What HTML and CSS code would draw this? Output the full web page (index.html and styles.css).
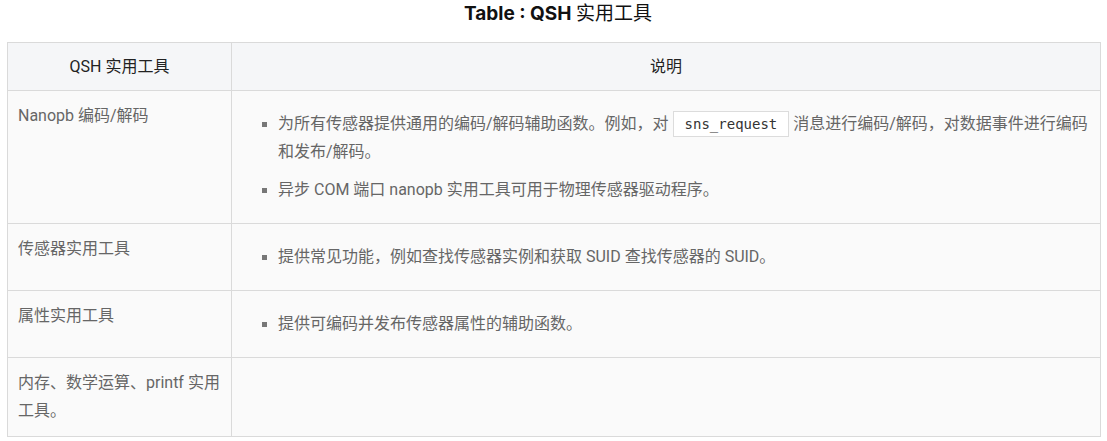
FILE: index.html
```html
<!DOCTYPE html>
<html lang="zh">
<head>
<meta charset="utf-8">
<link rel="stylesheet" href="styles.css">
</head>
<body>
<div class="wrap">
  <div class="caption">Table : QSH <span class="caption-cjk">实用工具</span></div>
  <table class="tbl">
    <colgroup><col class="c1"><col class="c2"></colgroup>
    <thead>
      <tr><th>QSH 实用工具</th><th>说明</th></tr>
    </thead>
    <tbody>
      <tr>
        <td>Nanopb 编码/解码</td>
        <td>
          <ul class="list">
            <li>为所有传感器提供通用的编码/解码辅助函数。例如，对 <code class="code">sns_request</code> 消息进行编码/解码，对数据事件进行编码和发布/解码。</li>
            <li>异步 COM 端口 nanopb 实用工具可用于物理传感器驱动程序。</li>
          </ul>
        </td>
      </tr>
      <tr>
        <td>传感器实用工具</td>
        <td>
          <ul class="list">
            <li>提供常见功能，例如查找传感器实例和获取 SUID 查找传感器的 SUID。</li>
          </ul>
        </td>
      </tr>
      <tr>
        <td>属性实用工具</td>
        <td>
          <ul class="list">
            <li>提供可编码并发布传感器属性的辅助函数。</li>
          </ul>
        </td>
      </tr>
      <tr>
        <td>内存、数学运算、printf 实用工具。</td>
        <td></td>
      </tr>
    </tbody>
  </table>
</div>
</body>
</html>
```

FILE: styles.css
```css
html, body {
  margin: 0;
  padding: 0;
  background: #ffffff;
}
.wrap {
  padding: 0 6px 0 7px;
}
.caption {
  font-family: "Inter", "Noto Sans CJK SC", sans-serif;
  font-weight: 700;
  font-size: 19px;
  color: #111;
  text-align: center;
  height: 42px;
  line-height: 28px;
  padding-left: 8px;
}
.caption-cjk {
  font-weight: 400;
}
.tbl {
  width: 100%;
  border-collapse: collapse;
  table-layout: fixed;
  font-family: "Roboto", "Noto Sans CJK SC", sans-serif;
  font-size: 16px;
  color: #666;
}
.c1 { width: 224px; }
.tbl th, .tbl td {
  border: 1px solid #dadada;
  vertical-align: top;
  text-align: left;
  padding: 11px 10px;
  line-height: 28px;
}
.tbl th {
  background: #f5f6f8;
  color: #222;
  font-weight: 400;
  text-align: center;
  padding: 10px;
  line-height: 27px;
}
.tbl td {
  background: #fafafa;
}
.list {
  margin: 8px 0;
  padding-left: 36px;
  list-style: square;
}
.list li {
  margin-bottom: 10px;
}
.list li:last-child {
  margin-bottom: 0;
}
.list li::marker {
  color: #777;
  font-size: 15px;
}
.code {
  font-family: "DejaVu Sans Mono", "Liberation Mono", monospace;
  font-size: 14px;
  color: #333;
  background: #fff;
  border: 1px solid #dcdcdc;
  padding: 4px 11px;
}
```
